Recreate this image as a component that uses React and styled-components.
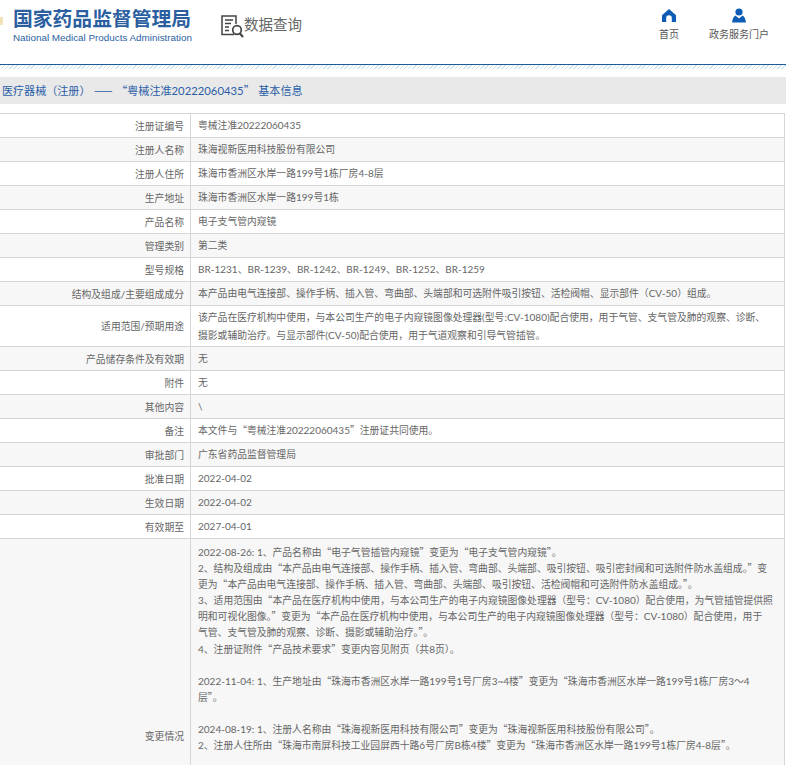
import React from 'react';
import styled, { createGlobalStyle } from 'styled-components';

const GlobalStyle = createGlobalStyle`
  html, body {
    margin: 0;
    padding: 0;
    background: #fff;
    overflow: hidden;
  }
  body {
    font-family: Lato, "Noto Sans CJK SC", sans-serif;
  }
`;

const Page = styled.div`
  width: 786px;
  height: 765px;
  overflow: hidden;
`;

const Header = styled.header`
  display: flex;
  align-items: flex-start;
  box-sizing: border-box;
  border-bottom: 1px solid #1c5d99;
  height: 65px;
`;

const Emblem = styled.svg`
  flex: none;
  width: 3px;
  height: 8px;
  margin-top: 17px;
`;

const Logo = styled.div`
  width: 178px;
  margin-left: 10px;
  padding-top: 7px;
`;

const LogoTitle = styled.div`
  font-family: "Noto Sans CJK SC", sans-serif;
  font-size: 19.8px;
  font-weight: 700;
  line-height: 22px;
  color: #2b5f9f;
  white-space: nowrap;
`;

const LogoSub = styled.div`
  margin-top: 2px;
  font-family: "Liberation Sans", sans-serif;
  font-size: 9.85px;
  line-height: 14px;
  color: #2b5f9f;
  white-space: nowrap;
`;

const QueryTitle = styled.div`
  display: flex;
  align-items: flex-start;
  margin: 15px 0 0 30px;
`;

const QueryText = styled.span`
  margin-top: -2px;
  font-family: "Noto Sans CJK SC", sans-serif;
  font-size: 14.5px;
  line-height: 21px;
  color: #666;
  white-space: nowrap;
`;

const Nav = styled.nav`
  display: flex;
  margin-left: auto;
  padding: 8px 17px 0 0;
  gap: 30px;
`;

const NavItem = styled.a`
  display: flex;
  flex-direction: column;
  align-items: center;
  font-family: "Noto Sans CJK SC", sans-serif;
  font-size: 10px;
  line-height: 14px;
  color: #555;
`;

const NavIcon = styled.svg`
  display: block;
  width: 14px;
  height: 15px;
  margin-bottom: 4px;
`;

const Stripes = styled.div`
  height: 4px;
  background: repeating-linear-gradient(135deg, #cfe6ef 0 1px, #fff 1px 3px);
`;

const Crumb = styled.div`
  margin-top: 8px;
  height: 27px;
  line-height: 27px;
  padding-left: 2px;
  background: #e9e9e9;
  font-size: 11.3px;
  word-spacing: 0.7px;
  color: #2a5ea8;
  white-space: nowrap;
`;

const Table = styled.table`
  width: 785px;
  margin-top: 9px;
  border-collapse: collapse;
  table-layout: fixed;
  font-size: 10px;
  color: #666;
`;

const Row = styled.tr`
  background: ${props => (props.$even ? '#f7f7f7' : '#fff')};
`;

const Label = styled.th`
  width: 184px;
  height: 23px;
  padding: 0 6px 0 0;
  border: 1px solid #d6d6d6;
  border-left: 0;
  font-weight: 400;
  text-align: right;
`;

const Value = styled.td`
  padding: 0 7px;
  border: 1px solid #d6d6d6;
  line-height: 17px;
  text-align: left;
`;

// these two cells carry their line breaks in the data
const Usage = styled(Value)`
  padding-top: 3px;
  padding-bottom: 2px;
  line-height: 17.5px;
  white-space: pre-line;
`;

const History = styled(Value)`
  height: 389px;
  padding-top: 5px;
  line-height: 16.1px;
  vertical-align: top;
  white-space: pre-line;
`;

// Chinese runs are a touch smaller than the Latin ones and their quotes stay full width
const Cjk = styled.span`
  font-family: "Noto Sans CJK SC", sans-serif;
  font-size: 0.98em;
`;

const marked = text =>
  text
    .split(/([\u2014\u201c\u201d\u3000-\u9fff\uff00-\uffef]+)/)
    .map((part, i) => (i % 2 ? <Cjk key={i}>{part}</Cjk> : part));

const HomeIcon = () => (
  <NavIcon viewBox="0 0 14 15">
    <path d="M7 1 L14 7.2 V14 H9.8 V10 A2.8 2.8 0 0 0 4.2 10 V14 H0 V7.2 Z" fill="#0f5cb5" />
  </NavIcon>
);

const PersonIcon = () => (
  <NavIcon viewBox="0 0 14 15">
    <circle cx="7" cy="4" r="3.6" fill="#0f5cb5" />
    <path d="M3.4 7.6 L7 10.4 L10.6 7.6 Q13 8.8 14 14.5 H0 Q1 8.8 3.4 7.6 Z" fill="#0f5cb5" />
  </NavIcon>
);

const QueryIcon = () => (
  <svg width="23" height="23" viewBox="0 0 23 23" fill="none" stroke="#444">
    <path d="M13 19.5 H1 V1 H15 V9" strokeWidth="1.5" />
    <path d="M4 5 H12 M4 8.5 H10 M4 12 H8 M4 15.5 H8" strokeWidth="1.4" />
    <circle cx="16" cy="15" r="4.3" strokeWidth="1.7" />
    <path d="M19 18.5 L22 22" strokeWidth="2.2" />
  </svg>
);

const rows = [
  ['注册证编号', '粤械注准20222060435'],
  ['注册人名称', '珠海视新医用科技股份有限公司'],
  ['注册人住所', '珠海市香洲区水岸一路199号1栋厂房4-8层'],
  ['生产地址', '珠海市香洲区水岸一路199号1栋'],
  ['产品名称', '电子支气管内窥镜'],
  ['管理类别', '第二类'],
  ['型号规格', 'BR-1231、BR-1239、BR-1242、BR-1249、BR-1252、BR-1259'],
  ['结构及组成/主要组成成分', '本产品由电气连接部、操作手柄、插入管、弯曲部、头端部和可选附件吸引按钮、活检阀帽、显示部件（CV-50）组成。'],
  ['适用范围/预期用途', '该产品在医疗机构中使用，与本公司生产的电子内窥镜图像处理器(型号:CV-1080)配合使用，用于气管、支气管及肺的观察、诊断、\n摄影或辅助治疗。与显示部件(CV-50)配合使用，用于气道观察和引导气管插管。', true],
  ['产品储存条件及有效期', '无'],
  ['附件', '无'],
  ['其他内容', '\\'],
  ['备注', '本文件与“粤械注准20222060435”注册证共同使用。'],
  ['审批部门', '广东省药品监督管理局'],
  ['批准日期', '2022-04-02'],
  ['生效日期', '2022-04-02'],
  ['有效期至', '2027-04-01'],
];

const changes = [
  '2022-08-26: 1、产品名称由“电子气管插管内窥镜”变更为“电子支气管内窥镜”。',
  '2、结构及组成由“本产品由电气连接部、操作手柄、插入管、弯曲部、头端部、吸引按钮、吸引密封阀和可选附件防水盖组成。”变\n更为“本产品由电气连接部、操作手柄、插入管、弯曲部、头端部、吸引按钮、活检阀帽和可选附件防水盖组成。”。',
  '3、适用范围由“本产品在医疗机构中使用，与本公司生产的电子内窥镜图像处理器（型号：CV-1080）配合使用，为气管插管提供照\n明和可视化图像。”变更为“本产品在医疗机构中使用，与本公司生产的电子内窥镜图像处理器（型号：CV-1080）配合使用，用于\n气管、支气管及肺的观察、诊断、摄影或辅助治疗。”。',
  '4、注册证附件“产品技术要求”变更内容见附页（共8页）。',
  '',
  '2022-11-04: 1、生产地址由“珠海市香洲区水岸一路199号1号厂房3~4楼”变更为“珠海市香洲区水岸一路199号1栋厂房3～4\n层”。',
  '',
  '2024-08-19: 1、注册人名称由“珠海视新医用科技有限公司”变更为“珠海视新医用科技股份有限公司”。',
  '2、注册人住所由“珠海市南屏科技工业园屏西十路6号厂房B栋4楼”变更为“珠海市香洲区水岸一路199号1栋厂房4-8层”。',
];

const App = () => (
  <Page>
    <GlobalStyle />
    <Header>
      <Emblem viewBox="0 0 3 8">
        <rect width="3" height="8" fill="#f1e2b8" />
      </Emblem>
      <Logo>
        <LogoTitle>国家药品监督管理局</LogoTitle>
        <LogoSub>National Medical Products Administration</LogoSub>
      </Logo>
      <QueryTitle>
        <QueryIcon />
        <QueryText>数据查询</QueryText>
      </QueryTitle>
      <Nav>
        <NavItem>
          <HomeIcon />
          首页
        </NavItem>
        <NavItem>
          <PersonIcon />
          政务服务门户
        </NavItem>
      </Nav>
    </Header>
    <Stripes />
    <Crumb>{marked('医疗器械（注册） —— “粤械注准20222060435” 基本信息')}</Crumb>
    <Table>
      <tbody>
        {rows.map(([label, value, tall], i) => (
          <Row key={label} $even={i % 2 === 1}>
            <Label>{marked(label)}</Label>
            {tall ? <Usage>{marked(value)}</Usage> : <Value>{marked(value)}</Value>}
          </Row>
        ))}
        <Row $even>
          <Label>{marked('变更情况')}</Label>
          <History>
            {changes.map((line, i) => (
              <div key={i}>{line ? marked(line) : <br />}</div>
            ))}
          </History>
        </Row>
      </tbody>
    </Table>
  </Page>
);

export default App;
